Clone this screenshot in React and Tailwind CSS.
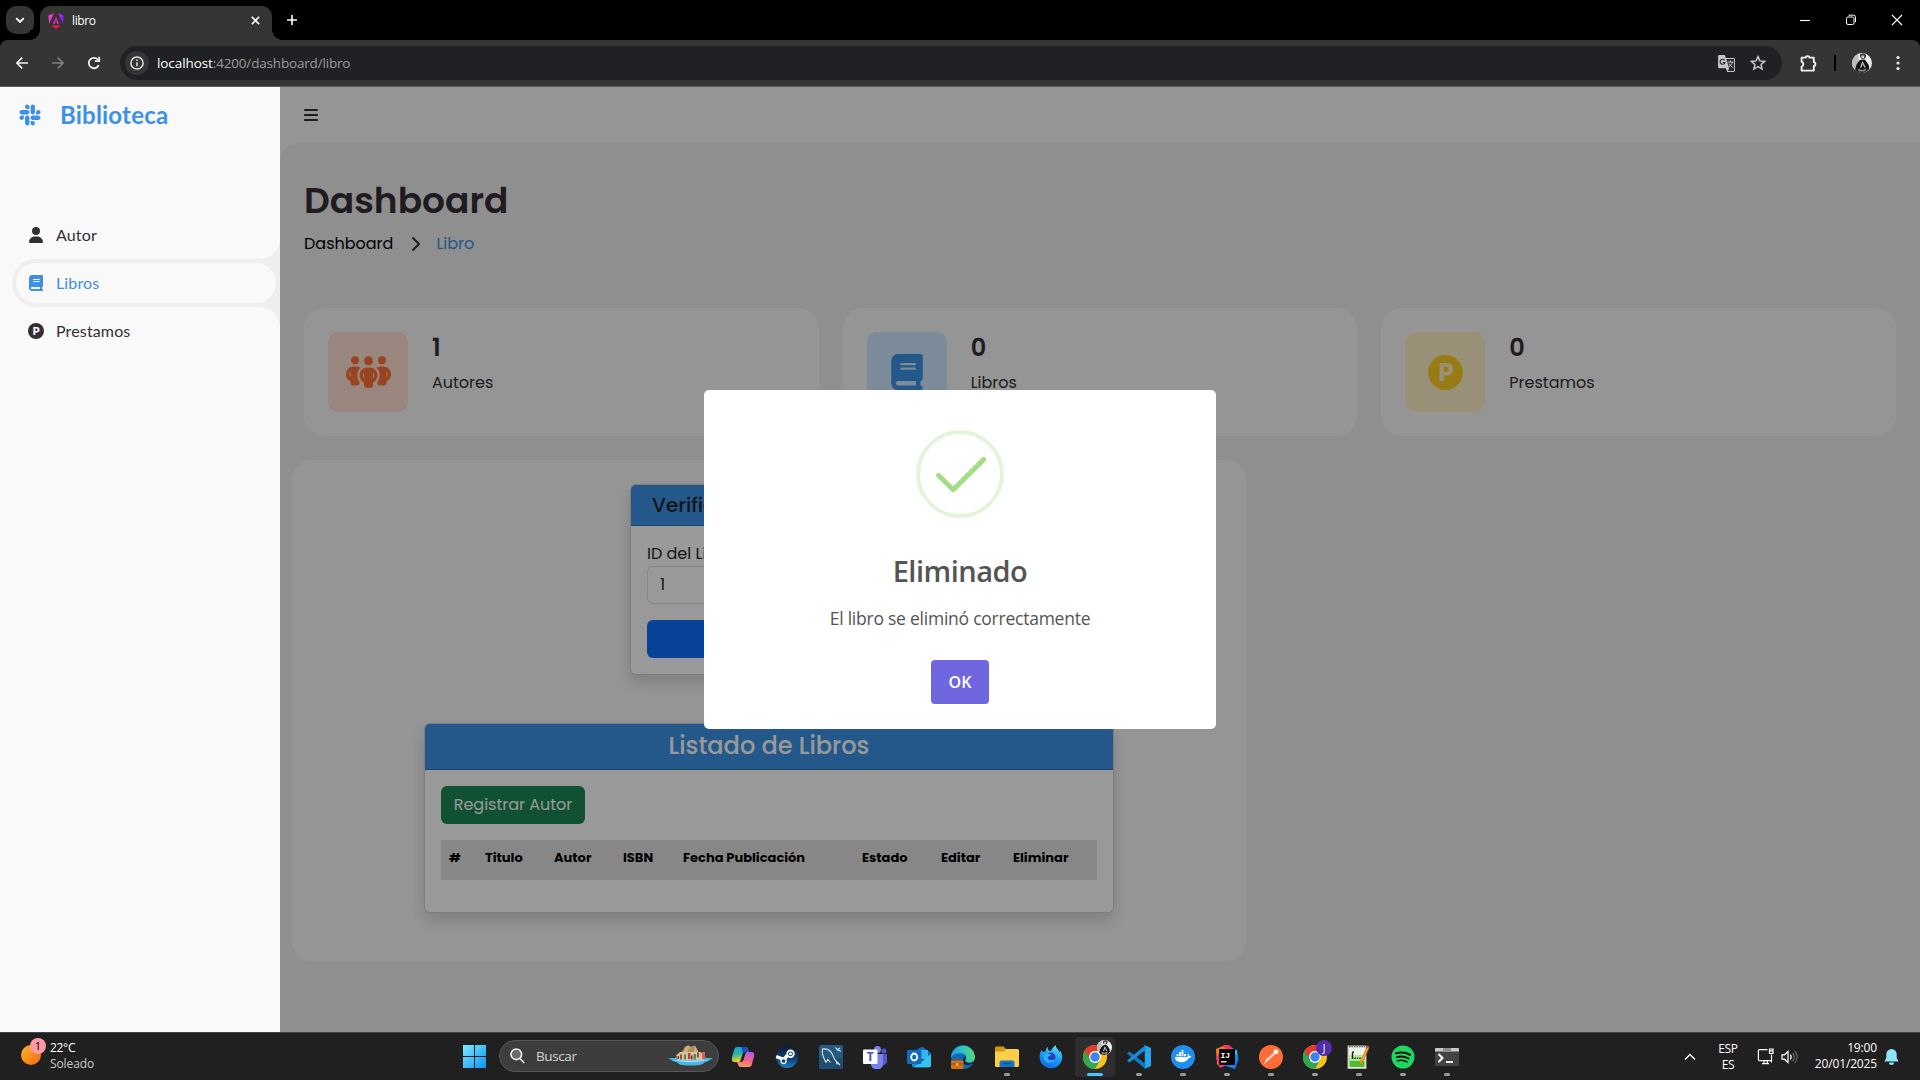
import { FaBars, FaBook, FaPeopleGroup, FaSlack, FaUser, FaChevronRight } from 'react-icons/fa6';

const POPPINS = "font-['Poppins','Inter',sans-serif]";
const SEGOE = "font-['Open_Sans','Noto_Sans',sans-serif]";

/* ---------- Browser chrome ---------- */

function TabStrip() {
  return (
    <div className={`flex h-10 shrink-0 items-end bg-black text-white ${SEGOE}`}>
      <button className="mb-1.5 ml-1.5 grid h-7 w-7 place-items-center rounded-[10px] bg-[#353535]">
        <svg width="10" height="7" viewBox="0 0 10 7" fill="none" stroke="#fff" strokeWidth="1.8"><path d="M1.2 1.2 5 5l3.800-3.800" /></svg>
      </button>
      <div className="relative ml-1.5 flex h-[34px] w-[232px] items-center rounded-t-[10px] bg-[#353535] pl-2">
        <span className="absolute -left-2.5 bottom-0 h-2.5 w-2.5 bg-[radial-gradient(circle_at_0_0,#000_9.500px,#353535_10px)]" />
        <span className="absolute -right-2.5 bottom-0 h-2.5 w-2.5 bg-[radial-gradient(circle_at_100%_0,#000_9.500px,#353535_10px)]" />
        <svg width="16" height="16" viewBox="0 0 16 16" className="mb-1">
          <defs>
            <linearGradient id="ng" x1="0" y1="0" x2="1" y2="0.300">
              <stop offset="0" stopColor="#f637c8" /><stop offset="0.500" stopColor="#e03ae0" /><stop offset="1" stopColor="#7a1df5" />
            </linearGradient>
          </defs>
          <path d="M5.800.2.300 2.400l.9 8.400zM10.200.200l5.500 2.200-.9 8.400z" fill="url(#ng)" />
          <path d="M8 3.800 4.800 11h1.800l.6-1.500h1.600l.6 1.500h1.800zM8 6.100l.7 2H7.300z" fill="#d92bb0" fillRule="evenodd" />
          <path d="M4.200 12.200h7.600l-.6 1.600L8 15.800l-3.200-2z" fill="#fb1540" />
        </svg>
        <span className="mb-1 ml-2 text-[12px] tracking-[-0.4px]">libro</span>
        <svg width="9" height="9" viewBox="0 0 9 9" stroke="#fff" strokeWidth="1.600" className="mb-1.5 ml-auto mr-3"><path d="m.8.8 7.400 7.400M8.200.8.800 8.200" /></svg>
      </div>
      <svg width="10" height="10" viewBox="0 0 10 10" stroke="#fff" strokeWidth="1.600" className="mb-[15px] ml-[15px]"><path d="M5 0v10M0 5h10" /></svg>
      <div className="mb-[14px] ml-auto mr-[17px] flex items-center text-white">
        <svg width="10" height="12" viewBox="0 0 10 12" stroke="#fff" strokeWidth="1.100"><path d="M0 6.500h10" /></svg>
        <svg width="10" height="12" viewBox="0 0 10 12" fill="none" stroke="#fff" strokeWidth="1" className="ml-9 mr-[35px]"><rect x=".5" y="3" width="7.500" height="7.500" rx="1.500" /><path d="M2.500 1.200h5a2 2 0 0 1 2 2v5" /></svg>
        <svg width="12" height="12" viewBox="0 0 12 12" stroke="#fff" strokeWidth="1.100"><path d="m1 1 10 10M11 1 1 11" /></svg>
      </div>
    </div>
  );
}

function Avatar({ size }) {
  return (
    <svg width={size} height={size} viewBox="0 0 20 20">
      <circle cx="10" cy="10" r="10" fill="#ececec" />
      <path d="M1 14a10 10 0 0 1 0-8 10 10 0 0 1 5-5l1 7-4 8z" fill="#bdbdbd" />
      <path d="M8 1.500c1.500-1.500 5-1.500 6 .500.5 1.500-.3 3-1.500 3.800H9.500C8.300 4.500 7.500 3 8 1.500z" fill="#3c3c3c" />
      <circle cx="10.800" cy="3.800" r="1.500" fill="#cfcfcf" />
      <path d="M3 17c.5-3 1.500-6.500 4.500-9.500L9.500 6.500h3L14 8c2 2.500 3.500 5 3.200 8A10 10 0 0 1 10 20a10 10 0 0 1-7-3z" fill="#151515" />
      <path d="M10.500 8 8 14.500h1.500L10.800 11l1.500 3.500h1.500z" fill="#c4c4c4" />
      <path d="m5.500 15.500 4.500 1.500 4.500-1.500-1.500 3H7z" fill="#8a8a8a" />
    </svg>
  );
}

function Toolbar() {
  return (
    <div className="shrink-0 bg-black">
      <div className={`flex h-[47px] items-center rounded-t-lg border-b border-[#5c5c5c] bg-[#353535] ${SEGOE}`}>
        <svg width="12" height="12" viewBox="0 0 12 12" fill="none" stroke="#f1f1f1" strokeWidth="1.700" className="ml-4"><path d="M6.200.700.900 6l5.300 5.300M1 6h11" /></svg>
        <svg width="12" height="12" viewBox="0 0 12 12" fill="none" stroke="#7d7d7d" strokeWidth="1.700" className="ml-6"><path d="M5.800.700 11.100 6l-5.300 5.300M11 6H0" /></svg>
        <svg width="14" height="14" viewBox="0 0 14 14" fill="none" stroke="#f1f1f1" strokeWidth="1.800" className="ml-[23px]">
          <path d="M11.700 9.200A5.200 5.200 0 1 1 11.200 4" /><path d="M12.200.800v4.300H7.900" />
        </svg>
        <div className="ml-[19px] flex h-[34px] w-[1662px] items-center rounded-full bg-[#202124] pl-[5px]">
          <span className="grid h-6 w-6 place-items-center rounded-full bg-[#353535]">
            <svg width="14" height="14" viewBox="0 0 14 14" fill="none" stroke="#e3e3e3" strokeWidth="1.500"><circle cx="7" cy="7" r="6.100" /><path d="M7 6.200v4M7 3.600v1.500" /></svg>
          </span>
          <span className="ml-2 whitespace-nowrap text-[13.500px] tracking-[-0.08px] text-white">localhost</span>
          <span className="whitespace-nowrap text-[13.500px] tracking-[-0.18px] text-[#9a9c9f]">:4200/dashboard/libro</span>
          <svg width="17" height="17" viewBox="0 0 17 17" className="ml-auto">
            <path d="M1.500 0h5.300l1 3H15.500a1.400 1.400 0 0 1 1.400 1.400v11.100a1.400 1.400 0 0 1-1.400 1.400H9.300l-1.500-3.600H1.500A1.400 1.400 0 0 1 .1 11.900V1.400A1.400 1.400 0 0 1 1.500 0z" fill="#c4c7c9" />
            <path d="M8.300 4h7.600v12h-6l1.200-2.700z" fill="#2a2b2e" />
            <path d="M6.600 5.200A2.500 2.500 0 1 0 7 7.500H4.800" fill="none" stroke="#2a2b2e" strokeWidth="1.200" />
            <path d="M9.800 7h5.400M12.500 5.600V7m2 0c-.6 2-2 3.600-3.700 4.700M11 8.600c.8 1.500 2 2.700 3.600 3.700" fill="none" stroke="#c4c7c9" strokeWidth="1" />
          </svg>
          <svg width="16" height="16" viewBox="0 0 16 16" fill="none" stroke="#c4c7c9" strokeWidth="1.500" className="ml-[15px] mr-4"><path d="m8 1.600 1.900 4.300 4.700.5-3.500 3.100 1 4.600L8 11.700l-4.100 2.400 1-4.600L1.400 6.400l4.700-.5z" /></svg>
        </div>
        <svg width="17" height="17" viewBox="0 0 17 17" fill="none" stroke="#f1f1f1" strokeWidth="1.900" strokeLinejoin="round" className="ml-[18px]">
          <path d="M1.600 2.600h4.200a1.800 1.500 0 0 1 3.600 0H13.800v4.500a1.600 1.900 0 0 1 0 3.800V15.600H1.600V11.600a2.200 2.500 0 0 0 0-4.900z" />
        </svg>
        <span className="ml-[17px] h-4 w-0.5 bg-black" />
        <span className="ml-[16px]"><Avatar size={20} /></span>
        <svg width="4" height="16" viewBox="0 0 4 16" fill="#f1f1f1" className="ml-6"><circle cx="2" cy="2.500" r="1.600" /><circle cx="2" cy="8" r="1.600" /><circle cx="2" cy="13.500" r="1.600" /></svg>
      </div>
    </div>
  );
}

/* ---------- Dashboard ---------- */

function ParkingIcon({ size, letter }) {
  return (
    <svg width={size} height={size} viewBox="0 0 16 16">
      <circle cx="8" cy="8" r="8" fill="currentColor" />
      <text x="8.300" y="11.800" textAnchor="middle" fontSize="10.800" fontWeight="800" className="font-['Inter',sans-serif]" fill={letter}>P</text>
    </svg>
  );
}

function Sidebar() {
  return (
    <aside className="relative z-20 w-[280px] shrink-0 bg-[#f9f9f9] font-['Lato',sans-serif] text-[#342e37]">
      <div className="flex h-14 items-center text-2xl font-bold tracking-[0.2px] text-[#3c91e6]">
        <span className="grid w-[60px] place-items-center"><FaSlack size={24} /></span>
        Biblioteca
      </div>
      <nav className="mt-[68px] text-base tracking-[0.14px]">
        <div className="flex h-12 items-center pl-7"><span className="w-7"><FaUser size={16} className="w-4" /></span>Autor</div>
        <div className="relative ml-3 h-12 rounded-l-full bg-[#eee] py-1 pl-1 pr-1 text-[#3c91e6]">
          <span className="absolute -top-5 right-0 h-5 w-5 bg-[radial-gradient(circle_at_0_0,#f9f9f9_19.500px,#eee_20px)]" />
          <span className="absolute -bottom-5 right-0 h-5 w-5 bg-[radial-gradient(circle_at_0_100%,#f9f9f9_19.500px,#eee_20px)]" />
          <div className="flex h-10 items-center rounded-full bg-[#f9f9f9] pl-3"><span className="w-7"><FaBook size={16} className="w-4" /></span>Libros</div>
        </div>
        <div className="flex h-12 items-center pl-7"><span className="w-7"><ParkingIcon size={16} letter="#f9f9f9" /></span>Prestamos</div>
      </nav>
    </aside>
  );
}

function StatCard({ icon, tone, value, label }) {
  return (
    <div className="flex h-32 gap-6 rounded-[20px] bg-[#f9f9f9] p-6">
      <span className={`grid h-20 w-20 place-items-center rounded-[10px] ${tone}`}>{icon}</span>
      <div className="-mt-0.5 flex flex-col text-[#342e37]">
        <span className="text-2xl font-semibold leading-9">{value}</span>
        <span className="mt-[5px] text-base leading-6">{label}</span>
      </div>
    </div>
  );
}

function BookCheck() {
  return (
    <section className="w-[278px] rounded-md border border-black/[0.175] bg-white shadow-[0_8px_16px_rgba(0,0,0,0.15)]">
      <h5 className="h-[41px] whitespace-nowrap rounded-t-[5px] border-b border-black/[0.175] bg-[#3c91e6] pl-[21px] text-xl font-medium leading-10 text-[#212529]">Verificar Libro</h5>
      <div className="flex flex-col p-4 text-base text-[#212529]">
        <label className="h-6 leading-6">ID del Libro</label>
        <div className="flex h-[38px] items-center rounded-md border border-[#dee2e6] px-3">1</div>
        <button className="mt-4 h-[38px] rounded-md bg-[#0d6efd] text-white">Verificar</button>
      </div>
    </section>
  );
}

const COLUMNS = ['#', 'Titulo', 'Autor', 'ISBN', 'Fecha Publicación', 'Estado', 'Editar', 'Eliminar'];

function BookList() {
  return (
    <section className="w-[690px] rounded-md border border-black/[0.175] bg-white shadow-[0_8px_16px_rgba(0,0,0,0.15)]">
      <h4 className="h-[46px] rounded-t-[5px] border-b border-black/[0.175] bg-[#3c91e6] text-center text-2xl font-medium leading-[44px] text-white">Listado de Libros</h4>
      <div className="p-4">
        <button className="h-[38px] w-36 rounded-md bg-[#198754] text-base text-white">Registrar Autor</button>
        <div className="mb-4 mt-4 grid h-10 grid-cols-[36px_69px_69px_60px_179px_79px_72px_1fr] border-b border-[#dee2e6] bg-[#e2e2e2] pt-2 text-[13px] font-bold leading-[19.500px] text-black">
          {COLUMNS.map((c) => <span key={c} className="pl-2">{c}</span>)}
        </div>
      </div>
    </section>
  );
}

function Modal() {
  return (
    <div className={`absolute inset-0 z-10 grid place-items-center bg-black/40 ${SEGOE}`}>
      <div role="dialog" className="flex h-[339px] w-[512px] flex-col items-center rounded-[5px] bg-white pt-10 text-[#545454]">
        <svg width="88" height="88" viewBox="0 0 88 88" fill="none">
          <circle cx="44" cy="44" r="42" stroke="#a5dc86" strokeOpacity="0.3" strokeWidth="4" />
          <path d="m22.500 45.300 14.700 14.500L67.700 29.500" stroke="#a5dc86" strokeWidth="5" strokeLinecap="round" strokeLinejoin="round" />
        </svg>
        <h2 className="mt-[33px] text-[29px] font-semibold leading-10 tracking-[-0.5px]">Eliminado</h2>
        <p className="mt-[15px] text-[17.500px] leading-6 tracking-[-0.24px]">El libro se eliminó correctamente</p>
        <button className="mt-[30px] h-11 w-[58px] rounded bg-[#7066e0] text-base font-semibold text-white">OK</button>
      </div>
    </div>
  );
}

function Page() {
  return (
    <div className="relative flex h-[945px] shrink-0 overflow-hidden">
      <Sidebar />
      <div className={`flex flex-1 flex-col bg-[#f9f9f9] ${POPPINS}`}>
        <header className="flex h-14 shrink-0 items-center pl-6 text-[#342e37]"><FaBars size={16} className="w-[14px]" /></header>
        <main className="flex-1 rounded-tl-[20px] bg-[#eee] px-6 pt-[31px]">
          <h1 className="h-[54px] text-4xl font-semibold leading-[54px] text-[#342e37]">Dashboard</h1>
          <div className="mt-1 flex h-6 items-center text-base">
            <span className="text-black">Dashboard</span>
            <FaChevronRight size={16} className="ml-[12px] mr-[11px] w-5 text-[#342e37]" />
            <span className="text-[#3c91e6]">Libro</span>
          </div>
          <div className="mt-[52px] grid grid-cols-3 gap-6">
            <StatCard icon={<FaPeopleGroup size={36} className="w-[45px]" />} tone="bg-[#ffe0d3] text-[#fd7238]" value="1" label="Autores" />
            <StatCard icon={<FaBook size={36} />} tone="bg-[#cfe8ff] text-[#3c91e6]" value="0" label="Libros" />
            <StatCard icon={<ParkingIcon size={35} letter="#fff2c6" />} tone="bg-[#fff2c6] text-[#ffce26]" value="0" label="Prestamos" />
          </div>
          <div className="-ml-3 mt-6 flex h-[501px] w-[954px] flex-col items-center gap-12 rounded-[20px] bg-[#f9f9f9] pt-6">
            <BookCheck />
            <BookList />
          </div>
        </main>
      </div>
      <Modal />
    </div>
  );
}

/* ---------- Taskbar ---------- */

function ChromeLogo() {
  return (
    <>
      <circle cx="12" cy="12" r="12" fill="#fbc116" />
      <path d="M1.600 6A12 12 0 0 0 12 24l5.200-9L12 12z" fill="#2da94f" />
      <path d="M1.600 6A12 12 0 0 1 22.400 6H12a6 6 0 0 0-5.200 9z" fill="#e33b2e" />
      <circle cx="12" cy="12" r="5.900" fill="#fff" />
      <circle cx="12" cy="12" r="4.700" fill="#3f83f0" />
    </>
  );
}

const APPS = [
  { name: 'copilot', art: (
    <>
      <defs>
        <linearGradient id="cpa" x1="0" y1="0" x2="0.200" y2="1"><stop offset="0" stopColor="#1a9af0" /><stop offset="0.500" stopColor="#27b5a5" /><stop offset="1" stopColor="#f5cf1d" /></linearGradient>
        <linearGradient id="cpb" x1="0.500" y1="0" x2="0.300" y2="1"><stop offset="0" stopColor="#b65bea" /><stop offset="0.500" stopColor="#f0628c" /><stop offset="1" stopColor="#fb9b55" /></linearGradient>
      </defs>
      <path d="M6 2h8.500c1.500 0 2 1 2.500 2.500L18 7h-3.500c-2 0-2.800 1-3.300 3l-1.500 5c-.5 1.500-1.200 2-2.700 2H3.500C1 17 .4 15 1 12.500L3 5c.5-2 1.500-3 3-3z" fill="url(#cpa)" />
      <path d="M18 22H9.500C8 22 7.500 21 7 19.500L6 17h3.500c2 0 2.800-1 3.300-3l1.500-5c.5-1.500 1.200-2 2.700-2h3.500c2.500 0 3.100 2 2.500 4.500L21 19c-.5 2-1.500 3-3 3z" fill="url(#cpb)" />
      <path d="M10 2h4.500c1.500 0 2 1 2.500 2.500L18 7h-3.500c-1.200 0-2 .4-2.500 1.200z" fill="#1c4fc4" />
    </>) },
  { name: 'steam', art: (
    <>
      <defs><linearGradient id="st" x1="0" y1="0" x2="0" y2="1"><stop offset="0" stopColor="#0c1c3e" /><stop offset="0.600" stopColor="#123f72" /><stop offset="1" stopColor="#1b87c5" /></linearGradient></defs>
      <circle cx="12" cy="12" r="11" fill="url(#st)" />
      <path d="M1.200 11.500 9 14.700l3.200-4.300" fill="none" stroke="#fff" strokeWidth="3.500" />
      <circle cx="15.500" cy="8.800" r="3.300" fill="none" stroke="#fff" strokeWidth="1.800" />
      <circle cx="15.500" cy="8.800" r="1.500" fill="#fff" />
      <circle cx="8.600" cy="16" r="2.500" fill="#163f6e" stroke="#fff" strokeWidth="1.300" />
    </>) },
  { name: 'mysql', art: (
    <>
      <rect width="24" height="24" rx="2" fill="#235a80" /><path d="M0 13h24v9a2 2 0 0 1-2 2H2a2 2 0 0 1-2-2z" fill="#1d4d70" />
      <path d="M7 17.500C4.500 13 2.500 8 3.500 4c4-.5 7.500 1 9.500 4.500 1.500 2.800 1.500 5.500 4.500 8l3.500 3.500M7 17.500l1.800-3 2.700 3M16.500 2.500l2 2.500 3.500 1.200M18 5l3-2M17.500 16.500l.5 3" fill="none" stroke="#dbe9f2" strokeWidth="1.100" />
    </>) },
  { name: 'teams', art: (
    <>
      <circle cx="21" cy="6" r="2.500" fill="#5059c9" /><circle cx="14.500" cy="4.500" r="3.500" fill="#7b83eb" />
      <path d="M17 9h7v7a4 4 0 0 1-5 4z" fill="#5059c9" /><path d="M8 9h12v8a6 6 0 0 1-12 3z" fill="#7b83eb" />
      <rect y="4.500" width="14.500" height="14.500" rx="1" fill="#fff" />
      <text x="7.200" y="16" textAnchor="middle" fontSize="12" fontWeight="700" fontFamily="Open Sans" fill="#4b53bc">T</text>
    </>) },
  { name: 'outlook', art: (
    <>
      <path d="M5 8 15 1.500 24 8v5H5z" fill="#1070c0" /><path d="M9 5h12v9H9z" fill="#36b6f2" />
      <path d="M5 10l19 10.500a1.800 1.800 0 0 1-1.800 1.800H6.800A1.800 1.800 0 0 1 5 20.500z" fill="#1490df" /><path d="M24 9v11.500a1.800 1.800 0 0 1-1.800 1.800H7z" fill="#32c5ee" />
      <rect y="5" width="14.500" height="14" rx="1.200" fill="#0f6cbd" /><ellipse cx="7.200" cy="12" rx="3" ry="3.500" fill="none" stroke="#fff" strokeWidth="1.800" />
    </>) },
  { name: 'edge', art: (
    <>
      <defs><linearGradient id="eg" x1="0" y1="0.500" x2="1" y2="0.300"><stop offset="0" stopColor="#1e9fe0" /><stop offset="0.500" stopColor="#2fc2c4" /><stop offset="1" stopColor="#62dd58" /></linearGradient></defs>
      <circle cx="12" cy="12" r="12" fill="#1467b8" />
      <path d="M.2 11A12 12 0 0 1 24 11.500c0 4-3 6-6.300 6-2.500 0-4-1.200-3.200-2.500 1.500-2.500.5-6-3-6.500C7 7.800 2 9 .2 13z" fill="url(#eg)" />
      <path d="M14.500 10.500c.8 2 .2 3.300-.3 4.500-.8 2.500 4.300 4.200 9 2-2 3.500-5 5-8 5l-4-6z" fill="#202020" />
      <path d="M13 19c3 1.500 6.500 1 9-.5A12 12 0 0 1 12.500 24z" fill="#1467b8" />
      <rect y="15.500" width="12.500" height="8.500" rx="1" fill="#cf7418" /><path d="M4 15.500v-1.300h4.500v1.300M0 19h12.500" stroke="#8c4708" strokeWidth="1" fill="none" /><rect x="5.200" y="18.300" width="2" height="2" fill="#ffd166" />
    </>) },
  { name: 'explorer', running: true, art: (
    <>
      <path d="M0 3a1.500 1.500 0 0 1 1.500-1.500h7L11 4v3H0z" fill="#d9970f" />
      <path d="M0 6.500h9l2-2.500h11.500A1.500 1.500 0 0 1 24 5.500v15a1.500 1.500 0 0 1-1.500 1.500h-21A1.500 1.500 0 0 1 0 20.500z" fill="#fbce49" />
      <path d="M4.500 22v-4.500a2 2 0 0 1 2-2h11a2 2 0 0 1 2 2V22z" fill="#1473c8" /><path d="M8 18.500h8" stroke="#0b4f92" strokeWidth="1.300" />
    </>) },
  { name: 'firefox', art: (
    <>
      <defs><linearGradient id="ff" x1="0.700" y1="0" x2="0.300" y2="1"><stop offset="0" stopColor="#5fe0ff" /><stop offset="0.500" stopColor="#189df5" /><stop offset="1" stopColor="#1169e0" /></linearGradient></defs>
      <path d="M2.500 5 4 7l2.500-.500C6.500 4.500 7.500 3 9 2v3l3 1c1-2.500 2.500-4 4.500-6 .3 3 2.500 4 4 7l1-1c2.500 5 2 10-1 13.500A11.500 11.500 0 0 1 1 15C0 11.500.8 8 2.500 5z" fill="url(#ff)" />
      <circle cx="11.500" cy="12.500" r="5" fill="#2b3db8" /><path d="M5 9c3-1.500 6 0 7.500.500-1 2-3.500 1.500-4 3 .5 3 5 3.500 8 1-1 5-8.500 6-11 1.500C4.500 13 4.300 11 5 9z" fill="#2faef8" />
    </>) },
  { name: 'chrome', active: true, art: <ChromeLogo /> },
  { name: 'vscode', running: true, art: (
    <>
      <path d="M17.500 0 24 3v18l-6.500 3z" fill="#2aa5ee" /><path d="M0 8.500 2.500 6.500 18.500 19v5z" fill="#0f7cc4" /><path d="M0 15.500l2.500 2L18.500 5V0z" fill="#1a8ad6" />
      <path d="M17.500 6.500v11L10.500 12z" fill="#202020" />
    </>) },
  { name: 'docker', running: true, art: (
    <>
      <circle cx="12" cy="12" r="12" fill="#1d8fef" />
      <path d="M4 12h12.500c.3-1.300-.2-2.300.8-3.300.8.700 1 1.400 1 2.300 1 0 1.700 0 2.200.500-.7 1-1.500 1.300-2.600 1.300-1.300 3-4 4.400-7.400 4.400C6.500 17.200 4 15.500 4 12z" fill="#fff" />
      <path d="M5.500 9.300h2v2h-2zM8 9.300h2v2H8zM10.500 9.300h2v2h-2zM13 9.300h2v2h-2zM8 6.900h2v2H8zM10.500 6.900h2v2h-2zM10.500 5h2v1.500h-2z" fill="#fff" />
    </>) },
  { name: 'idea', running: true, art: (
    <>
      <path d="M1 4 8 1l6 3L5 22 2 19z" fill="#fb7b1b" /><path d="M1 13 6 6l6 14-7 3z" fill="#fc2f8b" /><path d="M14 2l8 3 1.500 9L20 24l-9-3z" fill="#1183f0" /><path d="M8 0 14 0l6 5-8 3z" fill="#f4365c" /><path d="M16 3l6 3v5z" fill="#20c4f4" />
      <rect x="4" y="4" width="16" height="16" fill="#050505" />
      <text x="5.500" y="12.500" fontSize="8" fontWeight="700" fontFamily="Liberation Mono" fill="#fff">IJ</text><path d="M6 16.800h5.500" stroke="#fff" strokeWidth="1.300" />
    </>) },
  { name: 'postman', running: true, art: (
    <>
      <circle cx="12" cy="12" r="12" fill="#ff6c37" />
      <path d="m4.800 19 3-5.500 7-6 1.200 1.700-6.500 6z" fill="#fff" /><circle cx="17" cy="6.800" r="2.400" fill="#fff" /><path d="m8.500 14 6-5.300" stroke="#ff6c37" strokeWidth=".7" />
    </>) },
  { name: 'chrome-profile', running: true, art: <ChromeLogo /> },
  { name: 'notepad', running: true, art: (
    <>
      <rect x="1" y="1" width="18" height="22.500" fill="#f1f1ec" stroke="#b5b5b0" strokeWidth="1" /><path d="M2.500 13h15v9h-15z" fill="#49bf2b" /><path d="M2.500 10h15v6h-15z" fill="#b5e59b" />
      <path d="M2 1.500h16" stroke="#777" strokeWidth="2" strokeDasharray="1.500 1" />
      <path d="M5.500 7v7M8 12.500v1.500M10.500 12.500v1.500M13 12.500v1.500M5.500 7H7" stroke="#222" strokeWidth="1.400" />
      <path d="M20 2 13 17l-.5 3 2.500-2L22 3z" fill="#f0a91d" stroke="#b06d0c" strokeWidth=".5" /><path d="m19.500 2.500.8-2 2.200 1-.8 2z" fill="#d84a4a" />
    </>) },
  { name: 'spotify', running: true, art: (
    <>
      <circle cx="12" cy="12" r="11.500" fill="#1ed760" />
      <g fill="none" stroke="#121212" strokeLinecap="round"><path d="M5 8.300c5-1.400 10-.8 14 1.500" strokeWidth="2.200" /><path d="M5.800 12.200c4.200-1.200 8.200-.7 11.700 1.300" strokeWidth="1.900" /><path d="M6.400 15.700c3.500-.9 6.800-.5 9.600 1.200" strokeWidth="1.600" /></g>
    </>) },
  { name: 'terminal', running: true, art: (
    <>
      <rect y="3" width="24" height="18" rx="1" fill="#434343" /><path d="M0 4a1 1 0 0 1 1-1h22a1 1 0 0 1 1 1v2.500H0z" fill="#c9c9c9" /><path d="M8 3h8v3.500H8z" fill="#8f8f8f" />
      <path d="m3.500 9 4 4-4 4" fill="none" stroke="#fff" strokeWidth="2" /><path d="M11 17h7" stroke="#fff" strokeWidth="1.800" />
    </>) },
];

function TaskIcon({ app }) {
  return (
    <div className={`relative grid h-10 w-10 place-items-center rounded ${app.active ? 'bg-[#2e2e2e]' : ''}`}>
      <svg width="24" height="24" viewBox="0 0 24 24">{app.art}</svg>
      {app.active && <span className="absolute right-[3px] top-[3px]"><Avatar size={15} /></span>}
      {app.name === 'chrome-profile' && <span className="absolute right-[3px] top-[3px] flex h-4 w-4 items-center justify-center rounded-full bg-[#512da8] text-[10px] leading-none text-white">J</span>}
      {app.running && <span className="absolute bottom-px left-[17px] h-[3px] w-1.5 rounded-full bg-[#9a9a9a]" />}
      {app.active && <span className="absolute bottom-px left-3 h-[3px] w-4 rounded-full bg-[#4cc2ff]" />}
    </div>
  );
}

function Taskbar() {
  return (
    <footer className={`flex h-12 shrink-0 items-center border-t border-[#454545] bg-[#202020] text-[12px] leading-4 text-white ${SEGOE}`}>
      <div className="relative -mt-1 ml-[21px] h-5 w-5"><span className="block h-5 w-5 rounded-full bg-linear-to-br from-[#f6b52c] to-[#f2650f]" />
        <span className="absolute -top-[7px] left-[9px] flex h-4 w-4 items-center justify-center rounded-full bg-[#ff99a4] text-[11px] leading-none text-black">1</span>
      </div>
      <div className="-mt-px ml-[9px] w-[413px]">
        <div className="tracking-[-0.3px]">22°C</div>
        <div className="tracking-[-0.1px] text-[#c9c9c9]">Soleado</div>
      </div>
      <svg width="23" height="23" viewBox="0 0 23 23" className="shrink-0">
        <defs><linearGradient id="win" x1="0" y1="0" x2="1" y2="1"><stop offset="0" stopColor="#7deafc" /><stop offset="1" stopColor="#0a94f5" /></linearGradient></defs>
        <path d="M0 0h11v11H0zM12 0h11v11H12zM0 12h11v11H0zM12 12h11v11H12z" fill="url(#win)" />
      </svg>
      <div className="-mt-0.5 ml-[13px] flex h-8 w-[220px] items-center rounded-full border border-[#565656] bg-[#3d3d3d] pl-[10px] pr-[5px] text-[13.500px] text-[#d6d6d6]">
        <svg width="15" height="16" viewBox="0 0 15 16" fill="none" stroke="#f2f2f2" strokeWidth="1.600"><circle cx="6.300" cy="6.300" r="5.300" fill="#6a6a6a" /><path d="m10 10.500 4.300 4.500" /></svg>
        <span className="ml-[11px] tracking-[-0.4px]">Buscar</span>
        <svg width="45" height="21" viewBox="0 0 45 21" className="ml-auto">
          <path d="M0 13.500c4-1 7 0 8-1h29c2 1 5 0 8 1-4 1-4 3-8 3.500-3 3.500-9 3.500-14 3.500S10 20.500 9 17c-4 0-5-2.500-9-3.500z" fill="#49b6e6" />
          <path d="M5 14.500c8 1.500 28 1.500 35 0-6 3-28 3.500-35 0z" fill="#b0e4f7" />
          <path d="m13 8 4-6 3-1.500 3 1 4-1 4 7.500H13z" fill="#a8905f" /><path d="m17 2 3-1.500 2 1L19 8h-4zM27 1l3 5-1 3h-4z" fill="#d6ab74" />
          <path d="M8 10.500 12 7h20l5 2.500-2 5.500H10z" fill="#d8c3a0" />
          <path d="M12 9.500h2v5h-2zM20 8h2.500v6H20zM29 7.500h2v5h-2z" fill="#b8453c" /><path d="M16 9.500h2v5h-2zM25.500 9h2.500v5.500h-2.500z" fill="#3f8f62" /><path d="M34 7h3v7h-3z" fill="#d9605a" /><path d="M23 10.500h1.500v4H23zM9.500 11h1.500v3H9.500z" fill="#6c4030" />
        </svg>
      </div>
      <div className="ml-[4px] flex gap-1">{APPS.map((app) => <TaskIcon key={app.name} app={app} />)}</div>
      <div className="ml-auto flex items-center">
        <svg width="12" height="8" viewBox="0 0 12 8" fill="none" stroke="#fff" strokeWidth="1.400"><path d="m1 6.500 5-5 5 5" /></svg>
        <div className="ml-[21px] w-[22px] text-center tracking-[-0.3px]">ESP<br />ES</div>
        <svg width="17" height="17" viewBox="0 0 17 17" fill="none" stroke="#fff" strokeWidth="1.200" className="ml-[18px]">
          <path d="M10.500 1.600H2.600a1.200 1.200 0 0 0-1.200 1.200v8.700a1.200 1.200 0 0 0 1.200 1.200H14M5 15.600h7M7 12.700v2.900M10.300 12.700v2.900M14.500 6.500v8" /><path d="M12.500 1h3.500v4.500h-3.500zM12.500 2.800h3.500" />
        </svg>
        <svg width="17" height="14" viewBox="0 0 17 14" fill="none" stroke="#fff" strokeWidth="1.200" className="ml-[7px]">
          <path d="M1 4.800v4.400h2.500L7 12.500v-11L3.500 4.800z" /><path d="M9.300 4.600c1 1.400 1 3.400 0 4.800" /><path d="M11.600 2.800c2 2.500 2 5.900 0 8.400M13.800 1c3 3.600 3 8.400 0 12" stroke="#6a6a6a" />
        </svg>
        <div className="-mt-px ml-[15px] w-[64px] whitespace-nowrap text-right tracking-[-0.15px]">19:00<br />20/01/2025</div>
        <svg width="15" height="16" viewBox="0 0 15 16" fill="#8fe6fb" className="ml-[7px] mr-[21px]"><path d="M7.500 0A5.200 5.200 0 0 1 12.700 5.200v3.600l1.800 3.700H.500l1.800-3.700V5.200A5.200 5.200 0 0 1 7.500 0zM5 13.500h5a2.500 2.500 0 0 1-5 0z" /></svg>
      </div>
    </footer>
  );
}

export default function App() {
  return (
    <div className="flex h-[1080px] w-[1920px] flex-col overflow-hidden bg-black">
      <TabStrip />
      <Toolbar />
      <Page />
      <Taskbar />
    </div>
  );
}
